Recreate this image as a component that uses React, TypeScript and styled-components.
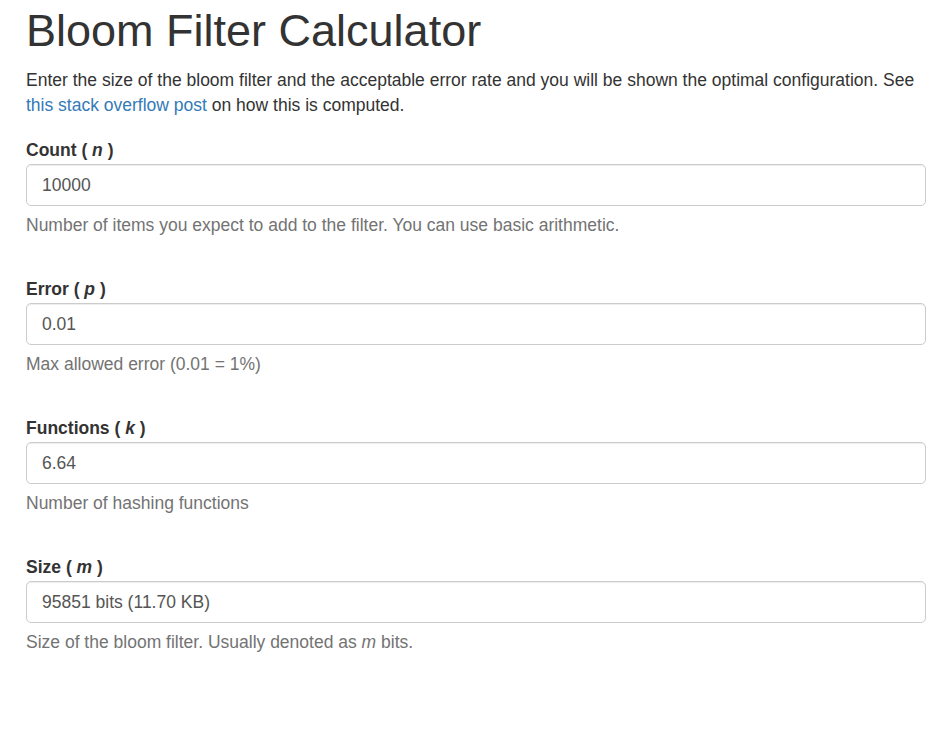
import styled, { createGlobalStyle } from "styled-components";

const GlobalStyle = createGlobalStyle`
    body {
        margin: 0;
        background: #fff;
        font-family: "Liberation Sans", Arial, Helvetica, sans-serif;
        font-size: 17.5px;
        line-height: 25px;
        color: #333;
    }
`;

const Page = styled.div`
    width: 900px;
    padding: 6px 24px 40px 26px;
`;

const Title = styled.h1`
    margin: 0 0 12px;
    font-size: 45px;
    line-height: 49.5px;
    font-weight: 500;
    color: #333;
`;

const Intro = styled.p`
    margin: 0 0 20.5px;
`;

const Link = styled.a`
    color: #337ab7;
    text-decoration: none;
`;

const Group = styled.div`
    display: flex;
    flex-direction: column;
    margin-bottom: 39px;
`;

const Label = styled.label`
    display: block;
    font-weight: bold;
    margin-bottom: 1px;
`;

const Input = styled.input`
    box-sizing: border-box;
    width: 100%;
    height: 42px;
    padding: 0 15px;
    border: 1px solid #ccc;
    border-radius: 5px;
    box-shadow: inset 0 1px 1px rgba(0, 0, 0, 0.075);
    font-family: inherit;
    font-size: 17.5px;
    color: #555;
    background: #fff;
    outline: none;
`;

const Help = styled.span`
    display: block;
    margin-top: 7px;
    color: #737373;
`;

type Field = {
    name: string;
    symbol: string;
    value: string;
    help: React.ReactNode;
};

const fields: Field[] = [
    {
        name: "Count",
        symbol: "n",
        value: "10000",
        help: "Number of items you expect to add to the filter. You can use basic arithmetic.",
    },
    {
        name: "Error",
        symbol: "p",
        value: "0.01",
        help: "Max allowed error (0.01 = 1%)",
    },
    {
        name: "Functions",
        symbol: "k",
        value: "6.64",
        help: "Number of hashing functions",
    },
    {
        name: "Size",
        symbol: "m",
        value: "95851 bits (11.70 KB)",
        help: (
            <>
                Size of the bloom filter. Usually denoted as <i>m</i> bits.
            </>
        ),
    },
];

export default function App() {
    return (
        <>
            <GlobalStyle />
            <Page>
                <Title>Bloom Filter Calculator</Title>
                <Intro>
                    Enter the size of the bloom filter and the acceptable error rate and you will be shown the
                    optimal configuration. See <Link href="#">this stack overflow post</Link> on how this is
                    computed.
                </Intro>

                {fields.map((f) => (
                    <Group key={f.name}>
                        <Label htmlFor={f.symbol}>
                            {f.name} ( <i>{f.symbol}</i> )
                        </Label>
                        <Input id={f.symbol} defaultValue={f.value} />
                        <Help>{f.help}</Help>
                    </Group>
                ))}
            </Page>
        </>
    );
}
